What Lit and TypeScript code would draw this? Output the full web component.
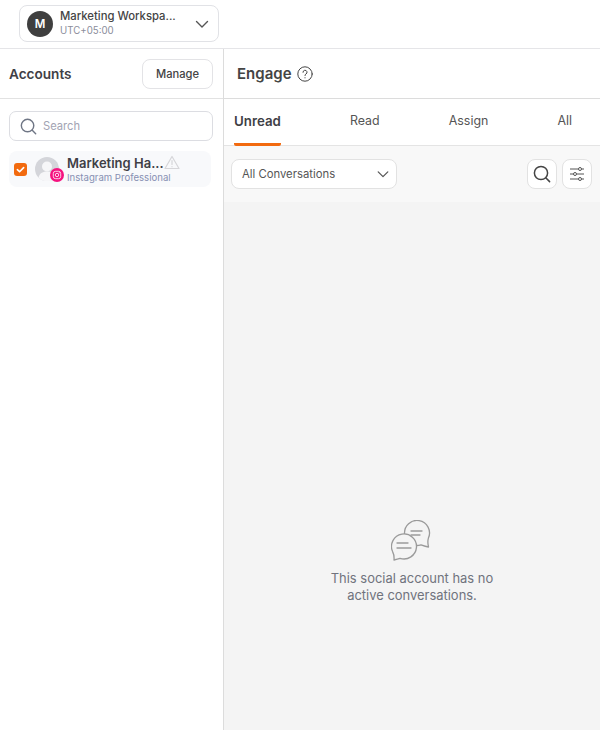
import { LitElement, html, css } from "lit";
import { customElement } from "lit/decorators.js";

const chevron = (w: number) => html`<svg width=${w} height=${w} viewBox="0 0 16 16" fill="none" stroke="#555" stroke-width="1.4" stroke-linecap="round" stroke-linejoin="round"><path d="M2.5 5.5 8 11l5.5-5.5"/></svg>`;
const search = (s: number, c: string) => html`<svg width=${s} height=${s} viewBox="0 0 18 18" fill="none" stroke=${c} stroke-width="1.5" stroke-linecap="round"><circle cx="8" cy="8" r="6.6"/><path d="M13 13l3.6 3.6"/></svg>`;

@customElement("app-root")
export class AppRoot extends LitElement {
  static styles = css`
    :host { display: block; width: 600px; height: 730px; overflow: hidden; background: #fff; font-family: "Inter", "Lato", sans-serif; color: #3f3f46; }
    * { box-sizing: border-box; }
    .top { height: 49px; border-bottom: 1px solid #e5e5e8; padding: 5px 0 0 19px; }
    .ws { width: 200px; height: 37px; border: 1px solid #e1e2e6; border-radius: 8px; display: flex; align-items: center; padding: 0 8px 0 7px; }
    .avatar { width: 26px; height: 26px; border-radius: 50%; background: #3f3f3f; color: #fff; font-size: 11.5px; font-weight: 600; display: flex; align-items: center; justify-content: center; flex: none; }
    .wstext { margin-left: 7px; flex: 1; min-width: 0; }
    .wsname { font-size: 11.3px; font-weight: 500; line-height: 15px; color: #444; white-space: nowrap; }
    .wssub { font-size: 9.7px; line-height: 14px; color: #8b8d9b; }
    .main { display: flex; height: 681px; }
    .side { width: 224px; flex: none; border-right: 1px solid #dcdcdc; }
    .sidehead { height: 50px; border-bottom: 1px solid #e2e2e2; display: flex; align-items: center; justify-content: space-between; padding: 0 10px 0 9px; }
    .sidehead h2 { margin: 0; font-size: 13.6px; font-weight: 600; color: #3f3f46; }
    .btn { width: 71px; height: 30px; border: 1px solid #e3e3e6; border-radius: 8px; background: #fff; display: flex; align-items: center; justify-content: center; font-size: 11.2px; font-weight: 500; color: #444; }
    .searchbox { margin: 12px 10px 0 9px; height: 30px; border: 1px solid #dcdde2; border-radius: 7px; display: flex; align-items: center; gap: 6px; padding-left: 10px; font-size: 11.2px; color: #a3a4b3; }
    .acct { margin: 10px 12px 0 9px; height: 36px; border-radius: 8px; background: #f8f9fb; display: flex; align-items: center; padding-left: 5px; }
    .check { width: 13px; height: 13px; border-radius: 3px; background: #f26a0f; display: flex; align-items: center; justify-content: center; flex: none; }
    .pic { position: relative; width: 24px; height: 24px; margin-left: 8px; flex: none; }
    .badge { position: absolute; right: -5px; bottom: -1px; width: 14px; height: 14px; }
    .acctname { margin-left: 8px; min-width: 0; }
    .nameline { display: flex; align-items: center; gap: 0; }
    .n { font-size: 13px; font-weight: 600; color: #3f3f46; line-height: 16px; white-space: nowrap; }
    .t { font-size: 9.6px; color: #8790b3; line-height: 13px; white-space: nowrap; }
    .content { flex: 1; min-width: 0; display: flex; flex-direction: column; }
    .head { height: 50px; border-bottom: 1px solid #dcdcdc; display: flex; align-items: center; padding-left: 14px; gap: 5px; margin-left: -1px; }
    .head h1 { margin: 0; font-size: 15px; font-weight: 600; color: #444; }
    .tabs { height: 47px; display: flex; border-bottom: 1px solid #e4e4e4; padding: 0 28px 0 10px; justify-content: space-between; font-size: 12.4px; color: #555; }
    .tab { display: flex; align-items: center; height: 43px; }
    .tab.on { font-size: 13.3px; font-weight: 600; color: #3f3f46; height: 47px; border-bottom: 3px solid #f26a0f; padding-bottom: 1px; border-radius: 0 0 2px 2px; }
    .bar { height: 56px; background: #f8f8f8; display: flex; align-items: center; padding: 0 8px 0 7px; gap: 5px; }
    .select { width: 166px; height: 30px; border: 1px solid #e2e2e2; border-radius: 8px; background: #fff; display: flex; align-items: center; justify-content: space-between; padding: 0 6px 0 10px; font-size: 11.3px; color: #555; margin-right: auto; }
    .icon { width: 30px; height: 30px; border: 1px solid #e2e2e2; border-radius: 8px; background: #fff; display: flex; align-items: center; justify-content: center; }
    .empty { flex: 1; background: #f4f4f4; display: flex; flex-direction: column; align-items: center; padding-top: 318px; }
    .bubbles { display: block; margin-left: -2px; }
    .empty p { margin: 9px 0 0; text-align: center; font-size: 12.95px; line-height: 17px; color: #70737d; }
  `;

  render() {
    return html`
      <div class="top">
        <div class="ws">
          <div class="avatar">M</div>
          <div class="wstext">
            <div class="wsname">Marketing Workspa...</div>
            <div class="wssub">UTC+05:00</div>
          </div>
          ${chevron(16)}
        </div>
      </div>
      <div class="main">
        <aside class="side">
          <div class="sidehead"><h2>Accounts</h2><div class="btn">Manage</div></div>
          <div class="searchbox">${search(17, "#6f7685")}<span>Search</span></div>
          <div class="acct">
            <div class="check"><svg width="9" height="9" viewBox="0 0 10 10" fill="none" stroke="#fff" stroke-width="1.8" stroke-linecap="round" stroke-linejoin="round"><path d="M1.5 5.2 4 7.5l4.5-4.6"/></svg></div>
            <div class="pic">
              <svg width="24" height="24" viewBox="0 0 24 24"><circle cx="12" cy="12" r="12" fill="#d4d5da"/><circle cx="12" cy="9.5" r="5" fill="#f6f6f8"/><path d="M3.500 20.500c1-4.500 5-6 8.500-6s7.500 1.500 8.500 6a11.500 11.500 0 0 1-17 0z" fill="#f6f6f8"/></svg>
              <svg class="badge" viewBox="0 0 14 14" fill="none"><circle cx="7" cy="7" r="7" fill="#f5127f"/><rect x="3.300" y="3.300" width="7.400" height="7.400" rx="2.200" stroke="#fff" stroke-width=".8"/><circle cx="7" cy="7" r="1.700" stroke="#fff" stroke-width=".8"/><circle cx="9.200" cy="4.800" r=".5" fill="#fff"/></svg>
            </div>
            <div class="acctname">
              <div class="nameline"><span class="n">Marketing Ha...</span>
                <svg width="16" height="15" viewBox="0 0 16 15" fill="none" stroke="#d6d6d9" stroke-width="1.2" stroke-linejoin="round" stroke-linecap="round"><path d="M8 1.500 15 13.500H1z"/><path d="M8 5.500v4M8 11.500v.2"/></svg>
              </div>
              <div class="t">Instagram Professional</div>
            </div>
          </div>
        </aside>
        <section class="content">
          <div class="head"><h1>Engage</h1>
            <svg width="16" height="16" viewBox="0 0 16 16" fill="none" stroke="#444" stroke-width="1" stroke-linecap="round"><circle cx="8" cy="8" r="7.200"/><path d="M6 6.300a2 2 0 1 1 3 1.700c-.7.400-1 .8-1 1.500"/><path d="M8 11.700v.2"/></svg>
          </div>
          <div class="tabs">
            <div class="tab on">Unread</div><div class="tab">Read</div><div class="tab">Assign</div><div class="tab">All</div>
          </div>
          <div class="bar">
            <div class="select"><span>All Conversations</span>${chevron(14)}</div>
            <div class="icon">${search(18, "#444")}</div>
            <div class="icon"><svg width="18" height="18" viewBox="0 0 18 18" fill="none" stroke="#555" stroke-width="1"><path d="M2 4h8.500M13.500 4H16M2 9h3.500M8.500 9H16M2 14h8.500M13.500 14H16"/><circle cx="12" cy="4" r="1.500"/><circle cx="7" cy="9" r="1.500"/><circle cx="12" cy="14" r="1.500"/></svg></div>
          </div>
          <div class="empty">
            <svg class="bubbles" width="40" height="41" viewBox="0 0 40 41" fill="none" stroke="#9a9a9a" stroke-width="1.300" stroke-linecap="round" stroke-linejoin="round">
              <path d="M30 24.800A12.500 12.500 0 1 1 37.400 18.100C36.500 21 36.800 24 37.500 27 35 26.500 32 25.500 30 24.800Z"/>
              <path d="M20 11h11M20 15h9"/>
              <path d="M9 38.300A12.500 12.500 0 1 0 1.600 31.600C2.800 34 3.300 37 3 40 5 39.500 7.500 38.800 9 38.300Z" fill="#f4f4f4"/>
              <path d="M6 23h11M6 28h14"/>
            </svg>
            <p>This social account has no<br />active conversations.</p>
          </div>
        </section>
      </div>
    `;
  }
}
